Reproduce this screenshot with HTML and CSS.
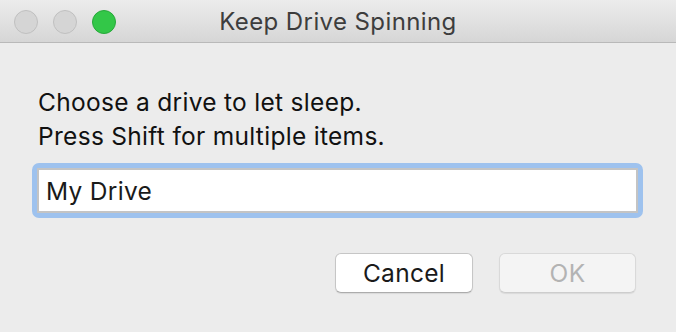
FILE: index.html
```html
<!DOCTYPE html>
<html lang="en">

<head>
    <meta charset="UTF-8">
    <meta name="viewport" content="width=device-width, initial-scale=1.0">
    <title>Keep Drive Spinning</title>
    <link rel="stylesheet" href="styles.css">
</head>

<body>
    <div class="window">
        <div class="titlebar">
            <div class="lights">
                <span class="light"></span>
                <span class="light"></span>
                <span class="light light-green"></span>
            </div>
            <div class="title">Keep Drive Spinning</div>
        </div>

        <div class="content">
            <p class="prompt">Choose a drive to let sleep.<br>Press Shift for multiple items.</p>

            <div class="field-ring">
                <input type="text" class="field" value="My Drive">
            </div>

            <div class="buttons">
                <button class="btn">Cancel</button>
                <button class="btn btn-disabled" disabled>OK</button>
            </div>
        </div>
    </div>
</body>

</html>
```

FILE: styles.css
```css
body {
    margin: 0;
    background-color: #ececec;
    font-family: Inter, "Liberation Sans", Arial, sans-serif;
    color: #1a1a1a;
}

.window {
    width: 676px;
    height: 332px;
    background-color: #ececec;
}

.titlebar {
    position: relative;
    height: 42px;
    display: flex;
    align-items: center;
    justify-content: center;
    background: linear-gradient(#ececec, #d6d6d6);
    border-bottom: 1px solid #b9b9b9;
}

.lights {
    position: absolute;
    left: 14px;
    top: 10px;
    display: flex;
    gap: 15px;
}

.light {
    width: 22px;
    height: 22px;
    border-radius: 50%;
    background-color: #d5d5d5;
    border: 1px solid #c0c0c0;
}

.light-green {
    background-color: #33c748;
    border-color: #27a83a;
}

.title {
    font-size: 24px;
    color: #3d3d3d;
    letter-spacing: 0.4px;
    padding-top: 1px;
}

.content {
    padding: 42px 33px 0 32px;
}

.prompt {
    margin: 0 0 10px 0;
    padding-left: 6px;
    font-size: 24.5px;
    line-height: 34px;
    letter-spacing: 0.3px;
    color: #111;
}

.field-ring {
    padding: 5px;
    background-color: #9ec2ee;
    border-radius: 7px;
}

.field {
    display: block;
    box-sizing: border-box;
    width: 100%;
    height: 45px;
    margin: 0;
    padding: 0 0 0 7px;
    border: 2px solid #c4c4c4;
    background-color: #fff;
    font-family: Inter, "Liberation Sans", Arial, sans-serif;
    font-size: 24.5px;
    letter-spacing: 0.3px;
    color: #1a1a1a;
    outline: none;
}

.buttons {
    display: flex;
    justify-content: flex-end;
    gap: 26px;
    margin-top: 35px;
    padding-right: 7px;
}

.btn {
    width: 138px;
    height: 40px;
    padding: 0;
    font-family: Inter, "Liberation Sans", Arial, sans-serif;
    font-size: 24.5px;
    letter-spacing: 0.3px;
    color: #1a1a1a;
    background-color: #fff;
    border: 1px solid #c6c6c6;
    border-bottom-color: #acacac;
    border-radius: 6px;
    box-shadow: 0 1px 1px rgba(0, 0, 0, 0.08);
}

.btn-disabled {
    width: 137px;
    color: #b3b3b3;
    background-color: #f4f4f4;
    border-color: #d9d9d9;
    border-bottom-color: #cdcdcd;
}
```
